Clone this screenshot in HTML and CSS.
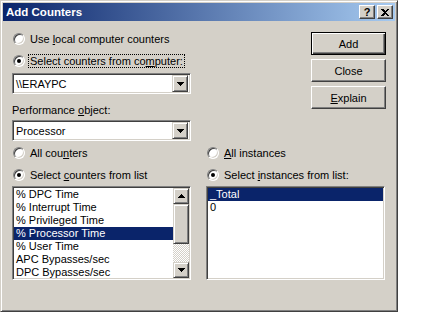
FILE: index.html
```html
<!DOCTYPE html>
<html lang="en">
<head>
<meta charset="UTF-8">
<title>Add Counters</title>
<link rel="stylesheet" href="styles.css">
</head>
<body>
<div class="dialog">
    <div class="titlebar">
        <span class="title">Add Counters</span>
        <span class="cbtn help">?</span>
        <span class="cbtn close">
            <svg width="8" height="7" viewBox="0 0 8 7" shape-rendering="crispEdges"><path d="M0 0H2L4 2L6 0H8L5 3.5L8 7H6L4 5L2 7H0L3 3.5Z" fill="#000"/></svg>
        </span>
    </div>
    <div class="content">
        <div class="top">
            <div class="source">
                <div class="radio"><span class="dot"></span><span>Use <u>l</u>ocal computer counters</span></div>
                <div class="radio"><span class="dot on"></span><span class="focus">Select counters from co<u>m</u>puter:</span></div>
                <div class="combo">
                    <span class="value">\\ERAYPC</span>
                    <span class="drop"><svg width="7" height="4" viewBox="0 0 7 4" shape-rendering="crispEdges"><path d="M0 0H7L3.5 4Z" fill="#000"/></svg></span>
                </div>
                <div class="label">Performance <u>o</u>bject:</div>
                <div class="combo">
                    <span class="value">Processor</span>
                    <span class="drop"><svg width="7" height="4" viewBox="0 0 7 4" shape-rendering="crispEdges"><path d="M0 0H7L3.5 4Z" fill="#000"/></svg></span>
                </div>
            </div>
            <div class="actions">
                <div class="btn default">Add</div>
                <div class="btn">Close</div>
                <div class="btn"><span><u>E</u>xplain</span></div>
            </div>
        </div>
        <div class="lists">
            <div class="col">
                <div class="radio"><span class="dot"></span><span>All cou<u>n</u>ters</span></div>
                <div class="radio last"><span class="dot on"></span><span>Select <u>c</u>ounters from list</span></div>
                <div class="list">
                    <div class="items">
                        <div class="item">% DPC Time</div>
                        <div class="item">% Interrupt Time</div>
                        <div class="item">% Privileged Time</div>
                        <div class="item sel">% Processor Time</div>
                        <div class="item">% User Time</div>
                        <div class="item">APC Bypasses/sec</div>
                        <div class="item">DPC Bypasses/sec</div>
                    </div>
                    <div class="scrollbar">
                        <span class="sbtn"><svg width="7" height="4" viewBox="0 0 7 4" shape-rendering="crispEdges"><path d="M0 4H7L3.5 0Z" fill="#000"/></svg></span>
                        <span class="thumb"></span>
                        <span class="track"></span>
                        <span class="sbtn"><svg width="7" height="4" viewBox="0 0 7 4" shape-rendering="crispEdges"><path d="M0 0H7L3.5 4Z" fill="#000"/></svg></span>
                    </div>
                </div>
            </div>
            <div class="col">
                <div class="radio"><span class="dot"></span><span><u>A</u>ll instances</span></div>
                <div class="radio last"><span class="dot on"></span><span>Select <u>i</u>nstances from list:</span></div>
                <div class="list">
                    <div class="items">
                        <div class="item sel">_Total</div>
                        <div class="item">0</div>
                    </div>
                </div>
            </div>
        </div>
    </div>
</div>
</body>
</html>
```
FILE: styles.css
```css
body{
    margin: 0;
    background: #fff;
    font: 11px "Liberation Sans", Arial, sans-serif;
    color: #000;
}
.dialog{
    width: 398px;
    height: 312px;
    box-sizing: border-box;
    background: #d4d0c8;
    border: 1px solid;
    border-color: #d4d0c8 #404040 #404040 #d4d0c8;
    box-shadow: inset 1px 1px #fff, inset -1px -1px #808080;
    padding: 2px;
}
.titlebar{
    height: 18px;
    display: flex;
    align-items: center;
    background: linear-gradient(90deg, #0a246a, #a6caf0);
    padding: 0 2px 0 3px;
}
.title{
    flex: 1;
    color: #fff;
    font-weight: bold;
    font-size: 11.5px;
}
.cbtn{
    width: 16px;
    height: 14px;
    box-sizing: border-box;
    display: flex;
    align-items: center;
    justify-content: center;
    background: #d4d0c8;
    border: 1px solid;
    border-color: #fff #404040 #404040 #fff;
    box-shadow: inset -1px -1px #808080;
    font-weight: bold;
    font-size: 11px;
    line-height: 1;
}
.help{
    margin-right: 2px;
}
.content{
    padding-left: 9px;
}
.top{
    display: flex;
}
.source{
    width: 179px;
    padding-top: 8px;
}
.radio{
    display: flex;
    align-items: center;
    height: 20px;
    margin-bottom: 2px;
    white-space: nowrap;
}
.radio.last{
    margin-bottom: 1px;
}
.dot{
    position: relative;
    width: 12px;
    height: 12px;
    box-sizing: border-box;
    margin: 0 5px 0 1px;
    border-radius: 50%;
    border: 1px solid;
    border-color: #808080 #fff #fff #808080;
    box-shadow: inset 1px 1px #404040, inset -1px -1px #d4d0c8;
    background: #fff;
    flex: none;
}
.dot.on::after{
    content: "";
    position: absolute;
    left: 3px;
    top: 3px;
    width: 4px;
    height: 4px;
    border-radius: 50%;
    background: #000;
}
.focus{
    border: 1px dotted #000;
    padding: 0 1px;
    margin-left: -2px;
}
.combo{
    height: 21px;
    box-sizing: border-box;
    display: flex;
    align-items: center;
    background: #fff;
    border: 1px solid;
    border-color: #808080 #fff #fff #808080;
    box-shadow: inset 1px 1px #404040, inset -1px -1px #d4d0c8;
    padding: 1px 2px 1px 3px;
}
.combo .value{
    flex: 1;
}
.drop, .sbtn{
    width: 16px;
    height: 17px;
    box-sizing: border-box;
    display: flex;
    align-items: center;
    justify-content: center;
    background: #d4d0c8;
    border: 1px solid;
    border-color: #d4d0c8 #404040 #404040 #d4d0c8;
    box-shadow: inset 1px 1px #fff, inset -1px -1px #808080;
}
.sbtn{
    height: 16px;
}
.label{
    padding-top: 10px;
    height: 13px;
    line-height: 13px;
    margin-bottom: 3px;
}
.actions{
    margin-left: 120px;
    padding-top: 11px;
}
.btn{
    width: 75px;
    height: 23px;
    box-sizing: border-box;
    display: flex;
    align-items: center;
    justify-content: center;
    margin-bottom: 4px;
    background: #d4d0c8;
    border: 1px solid;
    border-color: #fff #404040 #404040 #fff;
    box-shadow: inset -1px -1px #808080;
}
.btn.default{
    border: 1px solid #000;
    box-shadow: inset 1px 1px #fff, inset -1px -1px #404040, inset -2px -2px #808080;
}
.lists{
    display: flex;
    gap: 15px;
    margin-top: 2px;
}
.col{
    width: 179px;
}
.list{
    height: 94px;
    box-sizing: border-box;
    display: flex;
    background: #fff;
    border: 1px solid;
    border-color: #808080 #fff #fff #808080;
    box-shadow: inset 1px 1px #404040, inset -1px -1px #d4d0c8;
    padding: 1px;
    overflow: hidden;
}
.items{
    flex: 1;
    overflow: hidden;
}
.item{
    height: 13px;
    line-height: 13px;
    padding-left: 2px;
    white-space: nowrap;
}
.item.sel{
    background: #0a246a;
    color: #fff;
}
.scrollbar{
    width: 16px;
    display: flex;
    flex-direction: column;
}
.thumb{
    height: 40px;
    box-sizing: border-box;
    background: #d4d0c8;
    border: 1px solid;
    border-color: #d4d0c8 #404040 #404040 #d4d0c8;
    box-shadow: inset 1px 1px #fff, inset -1px -1px #808080;
}
.track{
    flex: 1;
    background: repeating-conic-gradient(#fff 0 25%, #d4d0c8 0 50%) 0 0 / 2px 2px;
}
```
